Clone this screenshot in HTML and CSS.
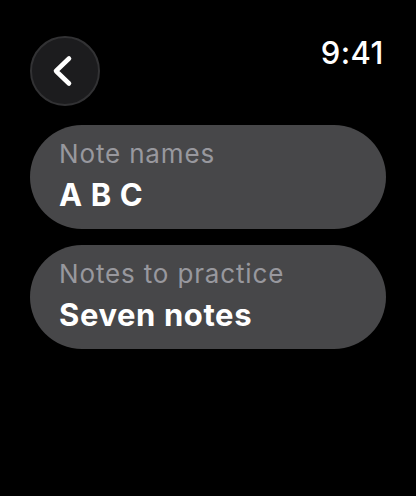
FILE: index.html
```html
<!DOCTYPE html>
<html>
<head>
<meta charset="utf-8">
<link rel="stylesheet" href="styles.css">
</head>
<body>
<div class="screen">
  <div class="header">
    <button class="back" aria-label="Back">
      <svg width="70" height="70" viewBox="0 0 70 70">
        <path d="M39 22.5 L26 35 L39 47.5" fill="none" stroke="#fff" stroke-width="4.6" stroke-linecap="round" stroke-linejoin="round"/>
      </svg>
    </button>
    <div class="time">9:41</div>
  </div>
  <div class="list">
    <div class="card">
      <div class="label">Note names</div>
      <div class="value">A B C</div>
    </div>
    <div class="card">
      <div class="label">Notes to practice</div>
      <div class="value">Seven notes</div>
    </div>
  </div>
</div>
</body>
</html>
```
FILE: styles.css
```css
html, body {
  margin: 0;
  padding: 0;
  background: #000;
}
.screen {
  width: 416px;
  height: 496px;
  box-sizing: border-box;
  padding: 36px 32px 0 30px;
  font-family: Inter, "Noto Sans", sans-serif;
  color: #fff;
}
.header {
  display: flex;
  justify-content: space-between;
  align-items: flex-start;
  height: 70px;
}
.back {
  position: relative;
  width: 70px;
  height: 70px;
  padding: 0;
  margin: 0;
  border-radius: 50%;
  background: #1c1c1e;
  border: 2px solid #323234;
  box-sizing: border-box;
  overflow: visible;
}
.back svg {
  position: absolute;
  left: -2px;
  top: -2px;
  display: block;
}
.time {
  font-size: 31px;
  font-weight: 500;
  line-height: 31px;
  margin-top: 1px;
  letter-spacing: 0.5px;
}
.list {
  margin-top: 19px;
  margin-right: -2px;
  display: flex;
  flex-direction: column;
  gap: 16px;
}
.card {
  height: 104px;
  border-radius: 52px;
  background: #474749;
  box-sizing: border-box;
  padding: 14px 20px 0 29px;
}
.label {
  font-size: 26px;
  line-height: 30px;
  color: #98989e;
  letter-spacing: 0.85px;
}
.value {
  font-size: 31px;
  line-height: 38px;
  font-weight: 700;
  margin-top: 7px;
  letter-spacing: 0.6px;
}
```
